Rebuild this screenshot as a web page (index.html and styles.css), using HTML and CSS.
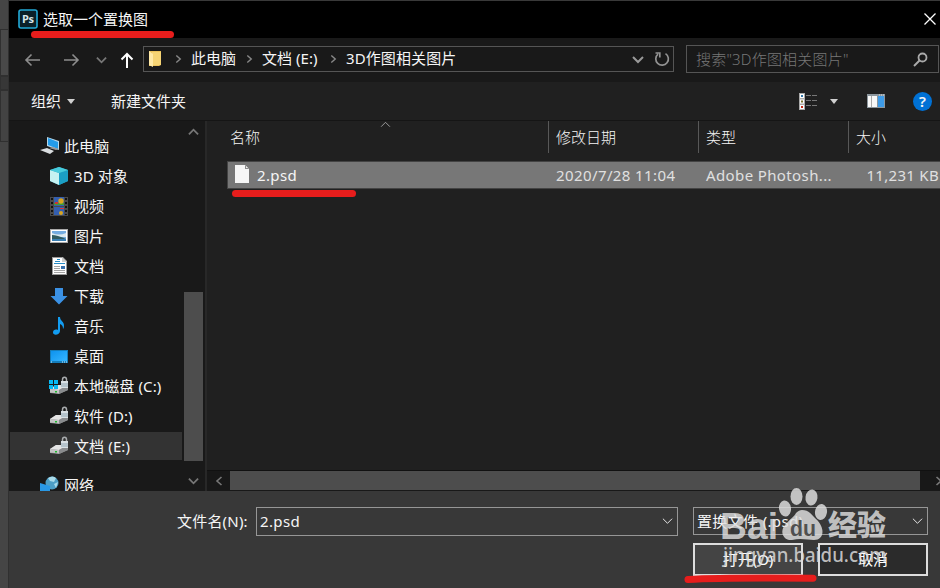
FILE: index.html
```html
<!DOCTYPE html>
<html lang="zh-CN">
<head>
<meta charset="utf-8">
<title>选取一个置换图</title>
<link rel="stylesheet" href="styles.css">
</head>
<body>
<svg width="0" height="0" class="defs">
  <defs>
    <linearGradient id="sky" x1="0" y1="0" x2="1" y2="1"><stop offset="0" stop-color="#0d93ef"/><stop offset="1" stop-color="#35b5ff"/></linearGradient>
    <symbol id="drive" viewBox="0 0 20 20">
      <path d="M1 13 7 9 19 9 19 14 10 18 1 17Z" fill="#8e9092"/>
      <path d="M1 13 7 9 18 9 10 14Z" fill="#e4e4e4"/>
      <path d="M1 13 10 14 10 17.5 1 16.5Z" fill="#c4c4c4"/>
      <path d="M10 14 19 10v4l-9 4Z" fill="#898b8d"/>
      <path d="M6 15h2v1.5H6z" fill="#20b830"/>
      <path d="M13.500 6V3.500c0-3 4-3 4 0v2.500" fill="none" stroke="#a9acae" stroke-width="1.5"/>
      <rect x="12" y="5" width="7" height="7" fill="#d9e0e4"/><path d="M12 8h7M12 10h7" stroke="#91a7b4"/>
    </symbol>
    <symbol id="down" viewBox="0 0 12 8"><path d="M1 1.5 6 6.5 11 1.5" fill="none" stroke="currentColor" stroke-width="var(--w,1)"/></symbol>
    <symbol id="right" viewBox="0 0 8 12"><path d="M1.5 2 6 6 1.5 10" fill="none" stroke="currentColor" stroke-width="1.6"/></symbol>
  </defs>
</svg>
<div class="screen">
  <div class="backdrop"><i class="tile t1"></i><i class="tile t2"></i><i class="tile t3"></i></div>
  <div class="dialog">
    <header class="titlebar">
      <svg class="ps" width="20" height="20" viewBox="0 0 20 20"><rect x="1" y="1" width="18" height="18" rx="2" fill="#0a2029" stroke="#22a9d6" stroke-width="1.6"/><text x="4" y="13.8">Ps</text></svg>
      <span>选取一个置换图</span>
      <svg class="close" width="14" height="14" viewBox="0 0 14 14"><path d="M1.5 1.5 12.5 12.5M12.5 1.5 1.5 12.5" stroke="#fff" stroke-width="1.3"/></svg>
    </header>
    <nav class="address">
      <svg class="back" width="17" height="14" viewBox="0 0 17 14"><path d="M16 7H2M7.5 1.5 2 7l5.500 5.500" fill="none" stroke="#8d8d8d" stroke-width="1.6"/></svg>
      <svg class="forward" width="17" height="14" viewBox="0 0 17 14"><path d="M1 7h14M9.500 1.500 15 7l-5.500 5.500" fill="none" stroke="#8d8d8d" stroke-width="1.6"/></svg>
      <svg class="recent" width="11" height="8"><use href="#down"/></svg>
      <svg class="up" width="14" height="16" viewBox="0 0 14 16"><path d="M7 16V2M1.500 7.500 7 2l5.500 5.500" fill="none" stroke="#fff" stroke-width="2"/></svg>
      <div class="path">
        <svg class="folder" width="14" height="18" viewBox="0 0 14 18"><path d="M1 1h12v14l-2 1H1z" fill="#edc35b"/><path d="M4 2h9v13H4z" fill="#f6d474"/><path d="m1 1 4 3v13l-4-2z" fill="#ffe9a7"/></svg>
        <svg class="c1" width="7" height="12"><use href="#right"/></svg>
        <span class="p1">此电脑</span>
        <svg class="c2" width="7" height="12"><use href="#right"/></svg>
        <span class="p2">文档 (E:)</span>
        <svg class="c2" width="7" height="12"><use href="#right"/></svg>
        <span class="p3">3D作图相关图片</span>
        <svg class="drop" width="12" height="9"><use href="#down"/></svg>
        <svg class="refresh" width="16" height="16" viewBox="0 0 16 16"><path d="M11.500 2.600A6.300 6.300 0 1 1 4 3.100M1.500 2h4.300v4.500" fill="none" stroke="#929292" stroke-width="1.700"/></svg>
      </div>
      <div class="search"><span>搜索"3D作图相关图片"</span><svg width="15" height="15" viewBox="0 0 15 15"><circle cx="9.500" cy="5.500" r="4" fill="none" stroke="#aaa" stroke-width="1.800"/><path d="M6.500 8.500 1 14" stroke="#aaa" stroke-width="2"/></svg></div>
    </nav>
    <div class="toolbar">
      <span>组织</span><i class="tri org"></i><span class="new">新建文件夹</span>
      <svg class="view" width="18" height="17" viewBox="0 0 18 17"><path d="M0 0h6v17H0z" fill="#aaa"/><path d="M1 1h4v4H1zM1 6.500h4v4H1zM1 12h4v4H1z" fill="#fff"/><path d="M2 2h2v2H2z" fill="#3275a8"/><path d="M2 7.500h2v2H2z" fill="#7c742f"/><path d="M2 13h2v2H2z" fill="#c32c18"/><path d="M7 2.500h5m1 0h5M7 7.500h5m1 0h5M7 12.500h5m1 0h5" stroke="#777"/></svg>
      <i class="tri"></i>
      <svg class="pane" width="18" height="14" viewBox="0 0 18 14"><path d="M0 0h18v14H0z" fill="#8c969d"/><path d="M1 2h9v11H1z" fill="#f8f8f8"/><path d="M4.500 2v11" stroke="#aaa"/><path d="M11 2h6v11h-6z" fill="#3e9be7"/><path d="M12 1h5" stroke="#ddd" stroke-dasharray="1 1"/></svg>
      <span class="help">?</span>
    </div>
    <main>
      <aside>
        <ul class="tree">
          <li class="root"><svg width="20" height="20" viewBox="0 0 20 20"><path d="m7 1 12 4v9L7 10z" fill="#b7d8ea"/><path d="m8 2 10 4v7L8 9z" fill="#239cea"/><path d="m9 12 4-1 6 2-3 1z" fill="#999"/><path d="m0 14 7-2 7 3-4 3z" fill="#d9dddf"/></svg>此电脑</li>
          <li><svg width="20" height="20" viewBox="0 0 20 20"><path d="m1 4 9-3 9 3v11l-9 4-9-4z" fill="#2aa9c4"/><path d="m1 4 9 3v12l-9-4z" fill="#c5f1f1"/><path d="m10 7 9-3v11l-9 4z" fill="#1b9fc5"/><path d="m1 4 9-3 9 3-9 3z" fill="#48cbdc"/></svg>3D 对象</li>
          <li><svg width="20" height="20" viewBox="0 0 20 20"><path d="M1 1h18v19H1z" fill="#4a4a4a"/><path d="M5 1h10v9H5zM5 11h10v8H5z" fill="#345faf"/><path d="M3 2v17M17 2v17" stroke="#111" stroke-width="2" stroke-dasharray="2 2"/><path d="M5 7h10v2H5z" fill="#3f9b38"/><circle cx="12" cy="5" r="2.700" fill="#d9a51f"/><path d="M6 6h3v2H6z" fill="#c33"/><path d="M11 12h4v1h-4z" fill="#d33"/><circle cx="12" cy="17" r="2" fill="#d9a51f"/></svg>视频</li>
          <li><svg width="20" height="20" viewBox="0 0 20 20"><path d="M1 3h18v14H1z" fill="#aaa"/><path d="M2 4h16v12H2z" fill="#fff"/><path d="M3 5h14v10H3z" fill="#75ace0"/><path d="M3 7q7 3 14 0v4H3z" fill="#dce9ee"/><path d="M3 9q5 0 14 4v2H3z" fill="#315d62"/><path d="M3 13h14v2H3z" fill="#397fb3"/></svg>图片</li>
          <li><svg width="20" height="20" viewBox="0 0 20 20"><path d="M3 1h11l4 4v14H3z" fill="#999"/><path d="M4 2h9v4h4v12H4z" fill="#fff"/><path d="m13 1 5 5h-5z" fill="#ccc"/><path d="M8 3.500h3M6 5.500h5M5 7.500h11" stroke="#268bc5"/><path d="M5 10.500h6M5 12.500h6M5 14.500h11M5 16.500h11" stroke="#a4a4a4"/><path d="M12 10h4v3h-4z" fill="#3771ad"/></svg>文档</li>
          <li><svg width="20" height="20" viewBox="0 0 20 20"><path d="M6 2h8v8h4.500L10 18.500 1.500 10H6z" fill="#3b91e4"/></svg>下载</li>
          <li><svg width="20" height="20" viewBox="0 0 20 20"><path d="M9 1h2c0 4 4 4 4 9 0 2-1 3-1 3 0-3-1-4-3-5v7c0 4-7 5-7 1.500C4 13.500 7 13 9 14z" fill="#129cf1"/></svg>音乐</li>
          <li><svg width="20" height="20" viewBox="0 0 20 20"><path d="M1 4h18v13H1z" fill="#147dbb"/><path d="M2 5h16v10H2z" fill="url(#sky)"/><path d="M2 16h2M13 16h5" stroke="#cceeff" stroke-dasharray="1 1"/></svg>桌面</li>
          <li><svg width="20" height="20" viewBox="0 0 20 20"><use href="#drive"/><path d="M0 4h4v4H0zM5 4h4v4H5zM0 9h4v4H0zM5 9h4v4H5z" fill="#08b9f2"/></svg>本地磁盘 (C:)</li>
          <li><svg width="20" height="20"><use href="#drive"/></svg>软件 (D:)</li>
          <li class="selected"><svg width="20" height="20"><use href="#drive"/></svg>文档 (E:)</li>
          <li class="root network"><svg width="20" height="20" viewBox="0 0 20 20"><circle cx="12" cy="8" r="6.500" fill="#4d9fc6"/><path d="M8 3q5-3 8 0l-2 4-4-1zM14 9l4-2-2 6z" fill="#a9dbea"/><path d="m0 8 10 3v9L0 16z" fill="#2998e5"/></svg>网络</li>
        </ul>
        <div class="vscroll"><svg class="upmark" width="11" height="8"><use href="#down"/></svg><i class="thumb"></i><svg class="downmark" width="11" height="8"><use href="#down"/></svg></div>
      </aside>
      <section class="files">
        <div class="columns"><span class="name">名称<svg class="sort" width="11" height="7"><use href="#down"/></svg></span><span>修改日期</span><span>类型</span><span>大小</span></div>
        <div class="row"><span class="file"><svg width="14" height="18" viewBox="0 0 14 18"><path d="M0 0h10l4 4v14H0z" fill="#f6f6f6"/><path d="M10 0v4h4z" fill="#8c8c8c"/><path d="M11 1v2h2z" fill="#eee"/></svg>2.psd<i class="mark filemark"></i></span><span class="date">2020/7/28 11:04</span><span class="type">Adobe Photosh...</span><span class="size">11,231 KB</span></div>
        <div class="hscroll"><svg class="left" width="8" height="12"><use href="#right"/></svg><i></i><svg class="right" width="8" height="12"><use href="#right"/></svg></div>
      </section>
    </main>
    <footer>
      <label>文件名(N):</label>
      <div class="field filename"><span>2.psd</span><svg width="11" height="8"><use href="#down"/></svg></div>
      <div class="field filter"><span>置换文件 (.psd)</span><svg width="11" height="8"><use href="#down"/></svg></div>
      <div class="buttons"><button class="open">打开(O)</button><button>取消</button></div>
    </footer>
  </div>
  <i class="mark titlemark"></i>
  <svg class="watermark" width="170" height="92" viewBox="720 482 170 92">
    <g fill="#dedede" fill-opacity=".83">
      <ellipse cx="796.500" cy="496.500" rx="6" ry="8.500"/><ellipse cx="811.500" cy="497.500" rx="6" ry="8" transform="rotate(8 811.500 497.500)"/>
      <ellipse cx="785" cy="508.500" rx="6" ry="8" transform="rotate(-8 785 508.500)"/><ellipse cx="821" cy="512" rx="6" ry="8" transform="rotate(8 821 512)"/>
      <path d="M802 510c7 0 10 5 14 9 9 8 9 21-2 21-6 0-13-2-22 0-8 1-13-8-7-15 5-6 9-8 11-12 2-2 4-3 6-3z"/>
      <text class="bai" x="720" y="539" textLength="58" lengthAdjust="spacingAndGlyphs">Bai</text>
      <text class="jingyan" x="828" y="536" textLength="58">经验</text>
      <text class="url" x="723" y="562" textLength="164" lengthAdjust="spacingAndGlyphs">jingyan.baidu.com</text>
    </g>
    <text class="du" x="790" y="536" textLength="26" lengthAdjust="spacingAndGlyphs">du</text>
  </svg>
  <svg class="openmark" width="134" height="10" viewBox="0 0 134 10"><path d="M4 5.500Q40 3.500 129 4.200" fill="none" stroke="#e71d1c" stroke-width="7" stroke-linecap="round"/></svg>
</div>
</body>
</html>
```
FILE: styles.css
```css
* { box-sizing: border-box; }
body { margin: 0; background: #202020; color: #f5f5f5; font: 15px/20px "Noto Sans", "Noto Sans CJK SC", sans-serif; overflow: hidden; }
svg { display: block; flex: none; }
.defs { position: absolute; }
.screen { position: relative; display: flex; width: 940px; height: 588px; overflow: hidden; }
.backdrop { width: 9px; background: #454545; border-right: 1px solid #303030; flex: none; padding-top: 29px; overflow: hidden; }
.tile { display: block; height: 47px; border: 1px solid #303030; border-right: 0; background: #494949; }
.t2 { height: 14px; background: #373737; }
.t3 { height: 52px; background: #434343; }
.dialog { width: 931px; display: flex; flex-direction: column; flex: none; border-top: 1px solid #393939; }
.titlebar { height: 37px; background: #000; display: flex; align-items: center; padding: 0 3px 2px 9px; flex: none; }
.titlebar span { margin-left: 5px; line-height: 20px; }
.ps text { font: bold 11px "Open Sans", sans-serif; fill: #d8e6ea; letter-spacing: -.5px; }
.close { margin-left: auto; }
.address { height: 44px; background: #191919; display: flex; align-items: center; padding: 0 0 2px 15px; flex: none; }
.back, .forward, .recent, .up { margin-top: 2px; }
.forward { margin-left: 22px; }
.recent { margin-left: 16px; color: #777; --w: 2; }
.up { margin-left: 13px; }
.path { width: 531px; height: 26px; margin-left: 9px; border: 1px solid #555; display: flex; align-items: center; padding: 0 3px 0 4px; }
.path span { margin-top: -2px; }
.c1, .c2 { color: #888; }
.c1 { margin-left: 13px; }
.p1 { margin-left: 9px; width: 46px; }
.c2 { margin-left: 9px; }
.p2 { width: 59px; margin-left: 9px; letter-spacing: .05px; white-space: nowrap; }
.p3 { margin-left: 9px; white-space: nowrap; letter-spacing: .1px; }
.drop { margin-left: auto; color: #999; --w: 2; }
.refresh { margin-left: 10px; }
.search { width: 253px; height: 28px; margin-left: 12px; border: 1px solid #555; display: flex; align-items: center; padding: 0 10px 0 9px; color: #777; font-weight: 300; letter-spacing: .2px; }
.search svg { margin-left: auto; }
.toolbar { height: 38px; background: #202020; display: flex; align-items: center; padding: 0 8px 0 22px; flex: none; }
.tri { border: 4px solid transparent; border-top: 5px solid #d0d0d0; border-bottom: 0; }
.org { margin-left: 6px; }
.new { margin-left: 36px; }
.view { margin-left: auto; margin-right: 13px; }
.pane { margin-left: 29px; }
.help { width: 19px; height: 19px; border-radius: 50%; background: #0071d5; margin-left: 28px; text-align: center; font-weight: 600; line-height: 19px; }
main { height: 371px; display: flex; flex: none; border-top: 1px solid #151515; }
aside { width: 198px; background: #191919; display: flex; border-right: 2px solid #282828; flex: none; overflow: hidden; }
.tree { list-style: none; margin: 0; padding: 10px 0 0; width: 174px; flex: none; }
.tree li { height: 30px; display: flex; align-items: center; padding-left: 40px; white-space: nowrap; letter-spacing: .12px; }
.tree li svg { margin-right: 5px; }
.tree li.root { padding-left: 31px; }
.tree li.root svg { margin-right: 4px; }
.tree li.selected { background: #333; background-clip: content-box; padding-left: 1px; margin: 1px 1px 0 0; height: 28px; }
.tree li.selected svg { margin-left: 39px; }
.tree li.network { margin-top: 10px; }
.vscroll { width: 20px; height: 100%; display: flex; flex-direction: column; align-items: center; padding: 7px 0 6px 1px; color: #777; --w: 2; }
.upmark { transform: rotate(180deg); }
.thumb { width: 19px; height: 169px; margin-top: 156px; background: #4d4d4d; }
.downmark { margin-top: auto; }
.files { width: 733px; background: #202020; display: flex; flex-direction: column; overflow: hidden; }
.columns { height: 33px; margin: 0 0 0 21px; display: flex; }
.columns span { width: 150px; border-right: 1px solid #585858; padding: 6px 0 0 7px; height: 32px; font-weight: 300; flex: none; }
.columns .name { width: 321px; padding-left: 2px; position: relative; }
.sort { position: absolute; left: 152px; top: 0; color: #aaa; transform: rotate(180deg); }
.row { height: 28px; width: 720px; margin: 7px 0 0 20px; display: flex; align-items: center; background: #777; border: 1px solid #434343; flex: none; white-space: nowrap; }
.file { width: 328px; padding-left: 7px; display: flex; align-items: center; position: relative; letter-spacing: .35px; }
.file svg { margin-right: 8px; position: relative; top: -1px; }
.date { width: 150px; color: #e0e0e0; letter-spacing: .4px; }
.type { width: 150px; color: #e0e0e0; letter-spacing: .38px; }
.size { color: #e0e0e0; width: 83px; text-align: right; letter-spacing: .3px; }
.mark { position: absolute; background: #e71d1c; border-radius: 4px; height: 7px; }
.filemark { left: 4px; top: 25px; width: 124px; }
.titlemark { left: 31px; top: 31px; width: 143px; }
.hscroll { margin-top: auto; height: 21px; background: #181818; display: flex; align-items: center; border-top: 1px solid #111; border-bottom: 1px solid #181818; color: #777; padding-left: 8px; }
.hscroll i { width: 690px; height: 19px; margin-left: 7px; background: #4d4d4d; flex: none; }
.hscroll .left { transform: rotate(180deg); }
.hscroll .right { margin-left: 15px; }
footer { height: 97px; background: #383838; display: grid; grid-template: 28px 34px / 72px 422px 235px; column-gap: 8px; row-gap: 8px; padding: 16px 0 0 167px; flex: none; }
footer label { white-space: nowrap; line-height: 28px; letter-spacing: .2px; padding-left: 1px; }
.field { height: 28px; border: 1px solid #969696; display: flex; align-items: center; padding: 0 4px 0 3px; justify-content: space-between; letter-spacing: .35px; }
.filename { height: 29px; padding-bottom: 1px; }
.filter { margin-left: 7px; width: 235px; height: 28px; }
.buttons { grid-column: 3; display: flex; gap: 15px; margin-left: 7px; }
button { width: 110px; height: 33px; flex: none; padding: 0 0 2px; background: #2b2b2b; color: #fff; border: 2px solid #ddd; font: inherit; }
.open { background: #444; }
.watermark { position: absolute; left: 720px; top: 482px; }
.bai { font: bold 36px "Liberation Sans", sans-serif; }
.du { font: bold 22px "Liberation Sans", sans-serif; fill: #505050; }
.jingyan { font: 900 29px "Noto Sans CJK SC", sans-serif; }
.url { font: 500 19px "Noto Sans", sans-serif; }
.openmark { position: absolute; left: 684px; top: 574px; }
```
